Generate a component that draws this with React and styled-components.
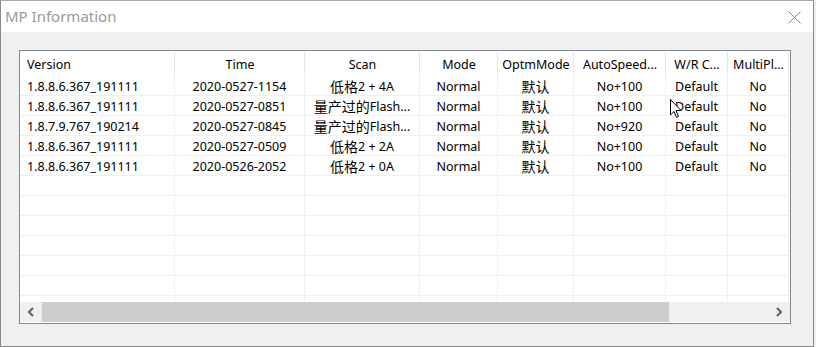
import React from "react";
import styled, { createGlobalStyle } from "styled-components";

const GlobalStyle = createGlobalStyle`
  html, body { margin: 0; padding: 0; background: #f0f0f0; }
  body { font-family: "Noto Sans", "Noto Sans CJK SC", sans-serif; }
  * { box-sizing: border-box; }
`;

const COLS = [155, 130, 115, 78, 76, 92, 62, 61];
const GRID = COLS.map((c) => `${c}px`).join(" ") + " 1fr";

const Window = styled.div`
  width: 814px;
  height: 347px;
  display: flex;
  flex-direction: column;
  border: 1px solid #8a8a8a;
  border-top-color: #a8a8a8;
  background: #f0f0f0;
`;

const TitleBar = styled.div`
  height: 31px;
  background: #ffffff;
  display: flex;
  align-items: center;
  justify-content: space-between;
  padding: 0 12px 0 4px;
  flex-shrink: 0;
`;

const Title = styled.span`
  font-family: "Noto Sans", sans-serif;
  font-size: 15px;
  color: #9a9a9a;
  margin-top: -1px;
`;

const CloseButton = styled.div`
  width: 14px;
  height: 14px;
  display: flex;
  align-items: center;
  justify-content: center;
  margin-top: 1px;
`;

const Content = styled.div`
  flex: 1;
  padding: 18px 0 0 18px;
`;

const ListBox = styled.div`
  position: relative;
  width: 772px;
  height: 274px;
  border: 1px solid #828790;
  background: #ffffff;
  display: flex;
  flex-direction: column;
  overflow: hidden;
`;

const HeaderRow = styled.div`
  display: grid;
  grid-template-columns: ${GRID};
  height: 25px;
  flex-shrink: 0;
`;

const HeaderCell = styled.div`
  position: relative;
  display: flex;
  align-items: center;
  justify-content: ${(p) => (p.$left ? "flex-start" : "center")};
  padding: ${(p) => (p.$left ? "1px 0 0 7px" : "1px 0 0 0")};
  font-size: 12.5px;
  color: #000;
  white-space: nowrap;
  overflow: hidden;
  &::after {
    content: "";
    position: absolute;
    right: 0;
    top: 1px;
    bottom: 1px;
    width: 1px;
    background: #e5e5e5;
    display: ${(p) => (p.$last ? "none" : "block")};
  }
`;

const Rows = styled.div`
  flex: 1;
  overflow: hidden;
`;

const Row = styled.div`
  display: grid;
  grid-template-columns: ${GRID};
  height: 20px;
  border-bottom: 1px solid #f0f0f0;
`;

const Cell = styled.div`
  display: flex;
  align-items: center;
  justify-content: ${(p) => (p.$left ? "flex-start" : "center")};
  padding-left: ${(p) => (p.$left ? "7px" : "0")};
  padding-top: 1px;
  font-size: 12.5px;
  color: #000;
  white-space: nowrap;
  overflow: hidden;
  border-right: ${(p) => (p.$last ? "none" : "1px solid #f0f0f0")};
`;

const Han = styled.span`
  font-family: "Noto Sans CJK SC", sans-serif;
  font-size: 14px;
  line-height: 1;
`;

const ScrollBar = styled.div`
  height: 20px;
  margin-bottom: 1px;
  background: #f0f0f0;
  display: flex;
  align-items: center;
  flex-shrink: 0;
`;

const ArrowButton = styled.div`
  width: 22px;
  height: 20px;
  display: flex;
  align-items: center;
  justify-content: center;
  flex-shrink: 0;
`;

const Track = styled.div`
  flex: 1;
  height: 20px;
  display: flex;
`;

const Thumb = styled.div`
  height: 20px;
  background: #cdcdcd;
`;

const Cursor = styled.svg`
  position: absolute;
  left: 650px;
  top: 48px;
`;

const headers = ["Version", "Time", "Scan", "Mode", "OptmMode", "AutoSpeed...", "W/R C...", "MultiPl..."];

const data = [
  ["1.8.8.6.367_191111", "2020-0527-1154", "低格2 + 4A", "Normal", "默认", "No+100", "Default", "No"],
  ["1.8.8.6.367_191111", "2020-0527-0851", "量产过的Flash...", "Normal", "默认", "No+100", "Default", "No"],
  ["1.8.7.9.767_190214", "2020-0527-0845", "量产过的Flash...", "Normal", "默认", "No+920", "Default", "No"],
  ["1.8.8.6.367_191111", "2020-0527-0509", "低格2 + 2A", "Normal", "默认", "No+100", "Default", "No"],
  ["1.8.8.6.367_191111", "2020-0526-2052", "低格2 + 0A", "Normal", "默认", "No+100", "Default", "No"],
];

const emptyRows = 7;

function MixedText({ text }) {
  const parts = text.split(/([\u4e00-\u9fff]+)/).filter(Boolean);
  return parts.map((p, i) =>
    /[\u4e00-\u9fff]/.test(p) ? <Han key={i}>{p}</Han> : <span key={i}>{p}</span>
  );
}

function Chevron({ dir }) {
  const d = dir === "left" ? "M6 1 L2 5 L6 9" : "M2 1 L6 5 L2 9";
  return (
    <svg width="8" height="10" viewBox="0 0 8 10">
      <path d={d} fill="none" stroke="#606060" strokeWidth="2" />
    </svg>
  );
}

export default function App() {
  return (
    <>
      <GlobalStyle />
      <Window>
        <TitleBar>
          <Title>MP Information</Title>
          <CloseButton>
            <svg width="13" height="13" viewBox="0 0 13 13">
              <path d="M0.5 0.5 L12.5 12.5 M12.5 0.5 L0.5 12.5" stroke="#8a8a8a" strokeWidth="1" />
            </svg>
          </CloseButton>
        </TitleBar>
        <Content>
          <ListBox>
            <HeaderRow>
              {headers.map((h, i) => (
                <HeaderCell key={h} $left={i === 0}>
                  {h}
                </HeaderCell>
              ))}
              <HeaderCell $last />
            </HeaderRow>
            <Rows>
              {data.map((r, ri) => (
                <Row key={ri}>
                  {r.map((c, ci) => (
                    <Cell key={ci} $left={ci === 0}>
                      <MixedText text={c} />
                    </Cell>
                  ))}
                  <Cell $last />
                </Row>
              ))}
              {Array.from({ length: emptyRows }).map((_, ri) => (
                <Row key={"e" + ri}>
                  {COLS.map((_, ci) => (
                    <Cell key={ci} />
                  ))}
                  <Cell $last />
                </Row>
              ))}
            </Rows>
            <ScrollBar>
              <ArrowButton>
                <Chevron dir="left" />
              </ArrowButton>
              <Track>
                <Thumb style={{ width: "627px" }} />
              </Track>
              <ArrowButton>
                <Chevron dir="right" />
              </ArrowButton>
            </ScrollBar>
            <Cursor width="12" height="20" viewBox="0 0 12 20">
              <path
                d="M0.5 0.5 L0.5 16 L4 12.5 L6.5 18.5 L8.5 17.5 L6 11.5 L11 11.5 Z"
                fill="#fff"
                stroke="#000"
                strokeWidth="1"
                strokeLinejoin="miter"
              />
            </Cursor>
          </ListBox>
        </Content>
      </Window>
    </>
  );
}
